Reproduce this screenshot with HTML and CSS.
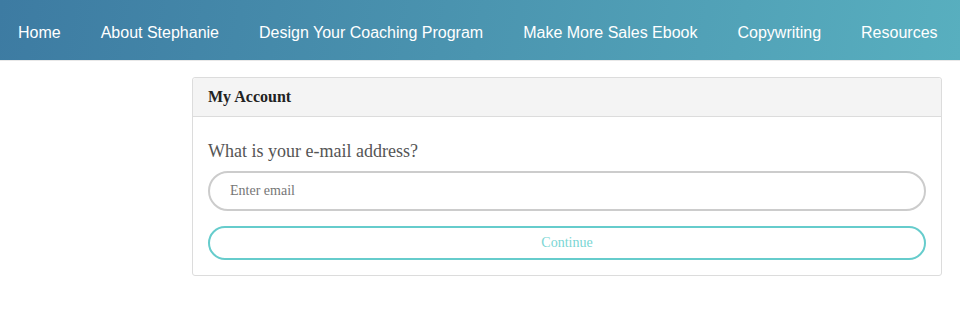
FILE: index.html
```html
<!DOCTYPE html>
<html>
<head>
<meta charset="utf-8">
<link rel="stylesheet" href="styles.css">
</head>
<body>
<nav class="topnav">
  <a class="nav-item" href="#">Home</a>
  <a class="nav-item" href="#">About Stephanie</a>
  <a class="nav-item" href="#">Design Your Coaching Program</a>
  <a class="nav-item" href="#">Make More Sales Ebook</a>
  <a class="nav-item" href="#">Copywriting</a>
  <a class="nav-item" href="#">Resources</a>
</nav>
<main class="content">
  <section class="card">
    <div class="card-header">My Account</div>
    <div class="card-body">
      <label class="question" for="email">What is your e-mail address?</label>
      <input class="email-input" id="email" type="text" placeholder="Enter email">
      <button class="continue-btn" type="button">Continue</button>
    </div>
  </section>
</main>
</body>
</html>
```
FILE: styles.css
```css
html, body {
  margin: 0;
  padding: 0;
  background: #fff;
}
body {
  font-family: "Liberation Serif", "Times New Roman", serif;
}
.topnav {
  display: flex;
  align-items: center;
  gap: 4px;
  height: 60px;
  background: linear-gradient(100deg, #3d7ba2 0%, #4b95b0 50%, #58afbf 100%);
  border-bottom: 1px solid #e8e8e8;
  box-sizing: content-box;
}
.nav-item {
  font-family: "Liberation Sans", Arial, sans-serif;
  font-size: 16px;
  color: #fff;
  text-decoration: none;
  padding: 6px 18px 0;
  line-height: 20px;
}
.content {
  padding: 16px 18px 0 192px;
}
.card {
  width: 750px;
  box-sizing: border-box;
  border: 1px solid #dcdcdc;
  border-radius: 3px;
  background: #fff;
}
.card-header {
  background: #f4f4f4;
  border-bottom: 1px solid #dcdcdc;
  padding: 9px 15px 9px;
  font-size: 16px;
  font-weight: bold;
  line-height: 20px;
  color: #222;
  border-radius: 3px 3px 0 0;
}
.card-body {
  display: flex;
  flex-direction: column;
  padding: 22px 15px 15px;
}
.question {
  font-size: 18px;
  line-height: 24px;
  color: #555;
  margin-bottom: 8px;
}
.email-input {
  height: 40px;
  box-sizing: border-box;
  border: 2px solid #cccccc;
  border-radius: 20px;
  padding: 0 20px;
  font-family: "Liberation Serif", "Times New Roman", serif;
  font-size: 14px;
  color: #333;
  outline: none;
  background: #fff;
}
.email-input::placeholder {
  color: #767676;
}
.continue-btn {
  margin-top: 15px;
  height: 34px;
  box-sizing: border-box;
  border: 2px solid #66cccc;
  border-radius: 17px;
  background: #fff;
  font-family: "Liberation Serif", "Times New Roman", serif;
  font-size: 14px;
  color: #7ad6d4;
  cursor: pointer;
}
```
